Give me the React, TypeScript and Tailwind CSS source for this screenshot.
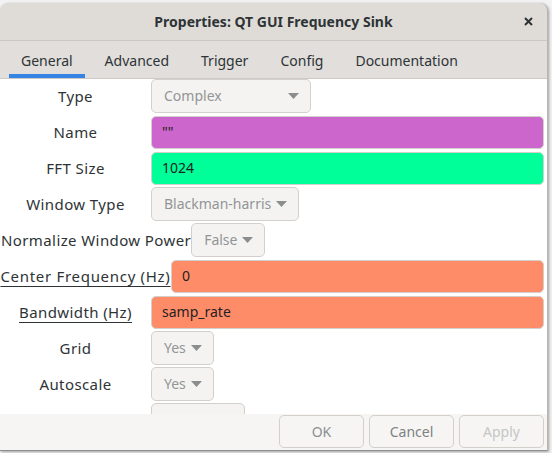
type Row = {
  label: string;
  kind: "combo" | "entry";
  value: string;
  bg?: string;
  width?: string;
  labelWidth?: string;
  underline?: boolean;
};

const rows: Row[] = [
  { label: "Type", kind: "combo", value: "Complex", width: "w-[160px] justify-between" },
  { label: "Name", kind: "entry", value: '""', bg: "bg-[#cc66cc]" },
  { label: "FFT Size", kind: "entry", value: "1024", bg: "bg-[#00ff99]" },
  { label: "Window Type", kind: "combo", value: "Blackman-harris" },
  { label: "Normalize Window Power", kind: "combo", value: "False", labelWidth: "pl-[1px]" },
  { label: "Center Frequency (Hz)", kind: "entry", value: "0", bg: "bg-[#ff8c69]", underline: true, labelWidth: "min-w-[171px] tracking-[0.7px]" },
  { label: "Bandwidth (Hz)", kind: "entry", value: "samp_rate", bg: "bg-[#ff8c69]", underline: true },
  { label: "Grid", kind: "combo", value: "Yes" },
  { label: "Autoscale", kind: "combo", value: "Yes" },
  { label: "", kind: "combo", value: "", width: "w-[94px]" },
];

const tabs = ["General", "Advanced", "Trigger", "Config", "Documentation"];

function Arrow() {
  return (
    <svg width="11" height="6" viewBox="0 0 11 6" className="shrink-0">
      <polygon points="0,0 11,0 5.5,6" fill="#8b8e8f" />
    </svg>
  );
}

function Combo({ value, width }: { value: string; width?: string }) {
  return (
    <div
      className={`flex h-[34px] items-center gap-[5px] rounded-[5px] border border-[#d3cfcb] bg-[#f4f3f2] pl-[12px] pr-[11px] text-[14px] text-[#929595] ${width ?? ""}`}
    >
      {value ? <span>{value}</span> : null}
      {value ? <Arrow /> : null}
    </div>
  );
}

function Entry({ value, bg }: { value: string; bg?: string }) {
  return (
    <div className={`flex h-[33px] flex-1 items-center rounded-[5px] border border-[#d3cfcb] pl-[10px] text-[14px] text-[#1e2222] ${bg ?? ""}`}>
      {value}
    </div>
  );
}

export default function App() {
  return (
    <div className="h-[453px] w-[552px] overflow-hidden bg-[#f2f2f2] font-['Noto_Sans',sans-serif] text-[15px] leading-none">
      <div className="h-[3px] overflow-hidden pl-[5px]">
        <div className="-mt-[13px] text-[13px] font-bold leading-[16px] tracking-[1px] text-black">Label of Coordinate</div>
      </div>

      <div className="flex h-[448px] w-[548px] flex-col overflow-hidden rounded-t-[8px] border-r border-b border-r-[#b9b5b0] border-b-[#8e8e8e] bg-[#dfdcd8] shadow-[1px_1px_3px_rgba(0,0,0,0.35)]">
        <div className="relative flex h-[37px] shrink-0 items-center justify-center text-[14px] font-bold text-[#2e3436]">
          Properties: QT GUI Frequency Sink
          <svg width="9" height="9" viewBox="0 0 9 9" className="absolute right-[14px] top-[14px]">
            <path d="M1 1 L8 8 M8 1 L1 8" stroke="#2e3436" strokeWidth="2" />
          </svg>
        </div>

        <div className="flex h-[39px] shrink-0 items-stretch gap-[8px] border-t border-b border-t-[#cbc7c2] border-b-[#cdc9c4] bg-[#e1dedb] pl-[9px] text-[14px]">
          {tabs.map((t, i) => (
            <div
              key={t}
              className={`flex items-center px-[12px] pt-[6px] text-[#2e3436] ${i === 0 ? "border-b-[4px] border-[#3584e4]" : "border-b-[4px] border-transparent"}`}
            >
              {t}
            </div>
          ))}
        </div>

        <div className="flex min-h-0 flex-1 flex-col gap-[2px] overflow-hidden bg-white pr-[3px]">
          {rows.map((r, i) => (
            <div key={i} className="flex h-[34px] shrink-0 items-center">
              <div className={`min-w-[151px] shrink-0 text-center tracking-[0.4px] text-[#2e3436] ${r.labelWidth ?? ""}`}>
                <span className={r.underline ? "underline decoration-[#2e3436] underline-offset-[4px]" : ""}>{r.label}</span>
              </div>
              {r.kind === "combo" ? <Combo value={r.value} width={r.width} /> : <Entry value={r.value} bg={r.bg} />}
            </div>
          ))}
        </div>

        <div className="flex h-[36px] shrink-0 items-start justify-end gap-[5px] bg-[#f6f5f4] pr-[3px] pt-[1px] text-[14px]">
          <button className="h-[33px] w-[85px] rounded-[5px] border border-[#d3cfcb] bg-[#f6f5f4] text-[#8b8e8f]">OK</button>
          <button className="h-[33px] w-[85px] rounded-[5px] border border-[#d3cfcb] bg-[#f6f5f4] text-[#7e8283]">Cancel</button>
          <button className="h-[33px] w-[85px] rounded-[5px] border border-[#d3cfcb] bg-[#f6f5f4] text-[#c4c6c6]">Apply</button>
        </div>
      </div>
    </div>
  );
}
